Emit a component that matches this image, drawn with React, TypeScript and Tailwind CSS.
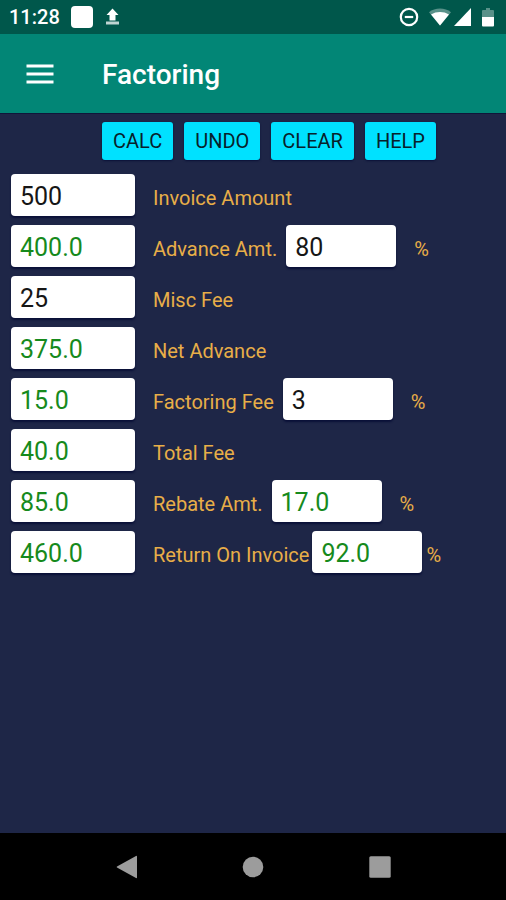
import * as React from "react"
import clsx from "clsx"

type Field = {
  id: string
  label: string
  value: string
  computed?: boolean
  percent?: { value: string; computed?: boolean; tight?: boolean }
}

const FIELDS: Field[] = [
  { id: "invoice", label: "Invoice Amount", value: "500" },
  { id: "advance", label: "Advance Amt.", value: "400.0", computed: true, percent: { value: "80" } },
  { id: "misc", label: "Misc Fee", value: "25" },
  { id: "net", label: "Net Advance", value: "375.0", computed: true },
  { id: "factoring", label: "Factoring Fee", value: "15.0", computed: true, percent: { value: "3" } },
  { id: "total", label: "Total Fee", value: "40.0", computed: true },
  { id: "rebate", label: "Rebate Amt.", value: "85.0", computed: true, percent: { value: "17.0", computed: true } },
  { id: "return", label: "Return On Invoice", value: "460.0", computed: true, percent: { value: "92.0", computed: true, tight: true } },
]

const ACTIONS = ["CALC", "UNDO", "CLEAR", "HELP"]

function StatusBar() {
  return (
    <div className="flex h-[34px] items-center bg-[#00574b] pl-[9px] pr-3 text-white">
      <span className="text-xl leading-6 font-medium">11:28</span>
      <span className="ml-[11px] h-[22px] w-[22px] rounded-[4px] bg-white" />
      <svg className="ml-3" width="15" height="18" viewBox="0 0 15 18" fill="currentColor" aria-hidden="true">
        <path d="M7.5 0.5L13.5 7H10.5V12.5H4.5V7H1.5Z" />
        <path d="M1 13.5H14V16.5H1Z" fillOpacity="0.75" />
      </svg>
      <svg className="ml-auto" width="20" height="20" viewBox="0 0 20 20" fill="none" stroke="currentColor" strokeWidth="2.2" aria-hidden="true">
        <circle cx="10" cy="10" r="8.2" />
        <path d="M5.8 10H14.2" />
      </svg>
      <svg className="ml-2.5" width="22" height="20" viewBox="0 0 22 20" fill="currentColor" aria-hidden="true">
        <path d="M0 5.2C6 .4 16 .4 22 5.2L11 18.5Z" fillOpacity="0.35" />
        <path d="M2 7.5C7.6 4.2 14.4 4.2 20 7.5L11 18.5Z" />
      </svg>
      <svg className="ml-[3px]" width="17" height="18" viewBox="0 0 17 18" fill="currentColor" aria-hidden="true">
        <path d="M17 0V18H0Z" />
      </svg>
      <svg className="ml-[11px]" width="12" height="20" viewBox="0 0 12 20" fill="currentColor" aria-hidden="true">
        <path d="M4 1H8V3H11Q12 3 12 4V11H0V4Q0 3 1 3H4Z" fillOpacity="0.35" />
        <path d="M0 10H12V18.5Q12 19.5 11 19.5H1Q0 19.5 0 18.5Z" />
      </svg>
    </div>
  )
}

function NumberBox({ id, value, computed, label, onChange, className }: {
  id: string
  value: string
  computed?: boolean
  label?: string
  onChange: (value: string) => void
  className: string
}) {
  return (
    <input
      id={id}
      aria-label={label}
      inputMode="decimal"
      value={value}
      readOnly={computed}
      onChange={(e) => onChange(e.target.value)}
      className={clsx(
        "h-[42px] rounded-[4px] bg-white px-[9px] pt-[3px] text-[25px] leading-8 shadow-[0_2px_2px_#0a1038] outline-none",
        computed ? "text-[#168a1c]" : "text-[#161616]",
        className
      )}
    />
  )
}

export default function App() {
  const [values, setValues] = React.useState<Record<string, string>>({})

  const update = (key: string) => (value: string) => setValues((prev) => ({ ...prev, [key]: value }))

  return (
    <div className="flex min-h-screen flex-col bg-[#1e2647] font-[Roboto,sans-serif]">
      <StatusBar />

      <header className="flex h-[79px] items-center bg-[#028676] pl-[26px] text-white">
        <button aria-label="Open menu" className="flex h-10 w-[28px] items-center">
          <svg width="28" height="20" viewBox="0 0 28 20" fill="currentColor" aria-hidden="true">
            <path d="M0.5 0.5H27.5V3.5H0.5ZM0.5 8.5H27.5V11.5H0.5ZM0.5 16.5H27.5V19.5H0.5Z" />
          </svg>
        </button>
        <h1 className="ml-12 pt-0.5 text-[28px] leading-8 font-medium">Factoring</h1>
      </header>

      <main className="flex-1 border-t border-[#10163a] px-[11px] pt-2">
        <div className="flex gap-[11px] pl-[91px]">
          {ACTIONS.map((action) => (
            <button
              key={action}
              className="h-[38px] rounded-[3px] bg-[#00e1ff] px-[11px] text-xl leading-6 text-[#08212b] shadow-[0_1px_2px_#0a1038]"
            >
              {action}
            </button>
          ))}
        </div>

        <div className="mt-3.5 flex flex-col gap-[9px]">
          {FIELDS.map((field) => (
            <div key={field.id} className="flex items-baseline text-xl leading-6 text-[#e8ae48]">
              <NumberBox
                id={field.id}
                value={values[field.id] ?? field.value}
                computed={field.computed}
                onChange={update(field.id)}
                className="w-[124px]"
              />
              <label htmlFor={field.id} className="ml-[18px] whitespace-nowrap">{field.label}</label>
              {field.percent && (
                <>
                  <NumberBox
                    id={`${field.id}-percent`}
                    label={`${field.label} percent`}
                    value={values[`${field.id}-percent`] ?? field.percent.value}
                    computed={field.percent.computed}
                    onChange={update(`${field.id}-percent`)}
                    className={clsx("w-[110px]", field.percent.tight ? "ml-[3px]" : "ml-[9px]")}
                  />
                  <label htmlFor={`${field.id}-percent`} className={field.percent.tight ? "ml-1" : "ml-[18px]"}>%</label>
                </>
              )}
            </div>
          ))}
        </div>
      </main>

      <nav className="h-[67px] bg-black text-[#9c9c9c]">
        <div className="mx-auto grid h-full w-3/4 grid-cols-3 place-items-center">
          <button aria-label="Back">
            <svg width="22" height="24" viewBox="0 0 22 24" fill="currentColor" aria-hidden="true">
              <path d="M20 1Q21 .5 21 1.5V22.5Q21 23.5 20 23L1 12.5Q.2 12 1 11.5Z" />
            </svg>
          </button>
          <button aria-label="Home">
            <svg width="22" height="22" viewBox="0 0 22 22" fill="currentColor" aria-hidden="true">
              <circle cx="11" cy="11" r="10.3" />
            </svg>
          </button>
          <button aria-label="Recent apps">
            <svg width="22" height="22" viewBox="0 0 22 22" fill="currentColor" aria-hidden="true">
              <rect x="0.3" y="0.3" width="21.4" height="21.4" rx="1.5" />
            </svg>
          </button>
        </div>
      </nav>
    </div>
  )
}
